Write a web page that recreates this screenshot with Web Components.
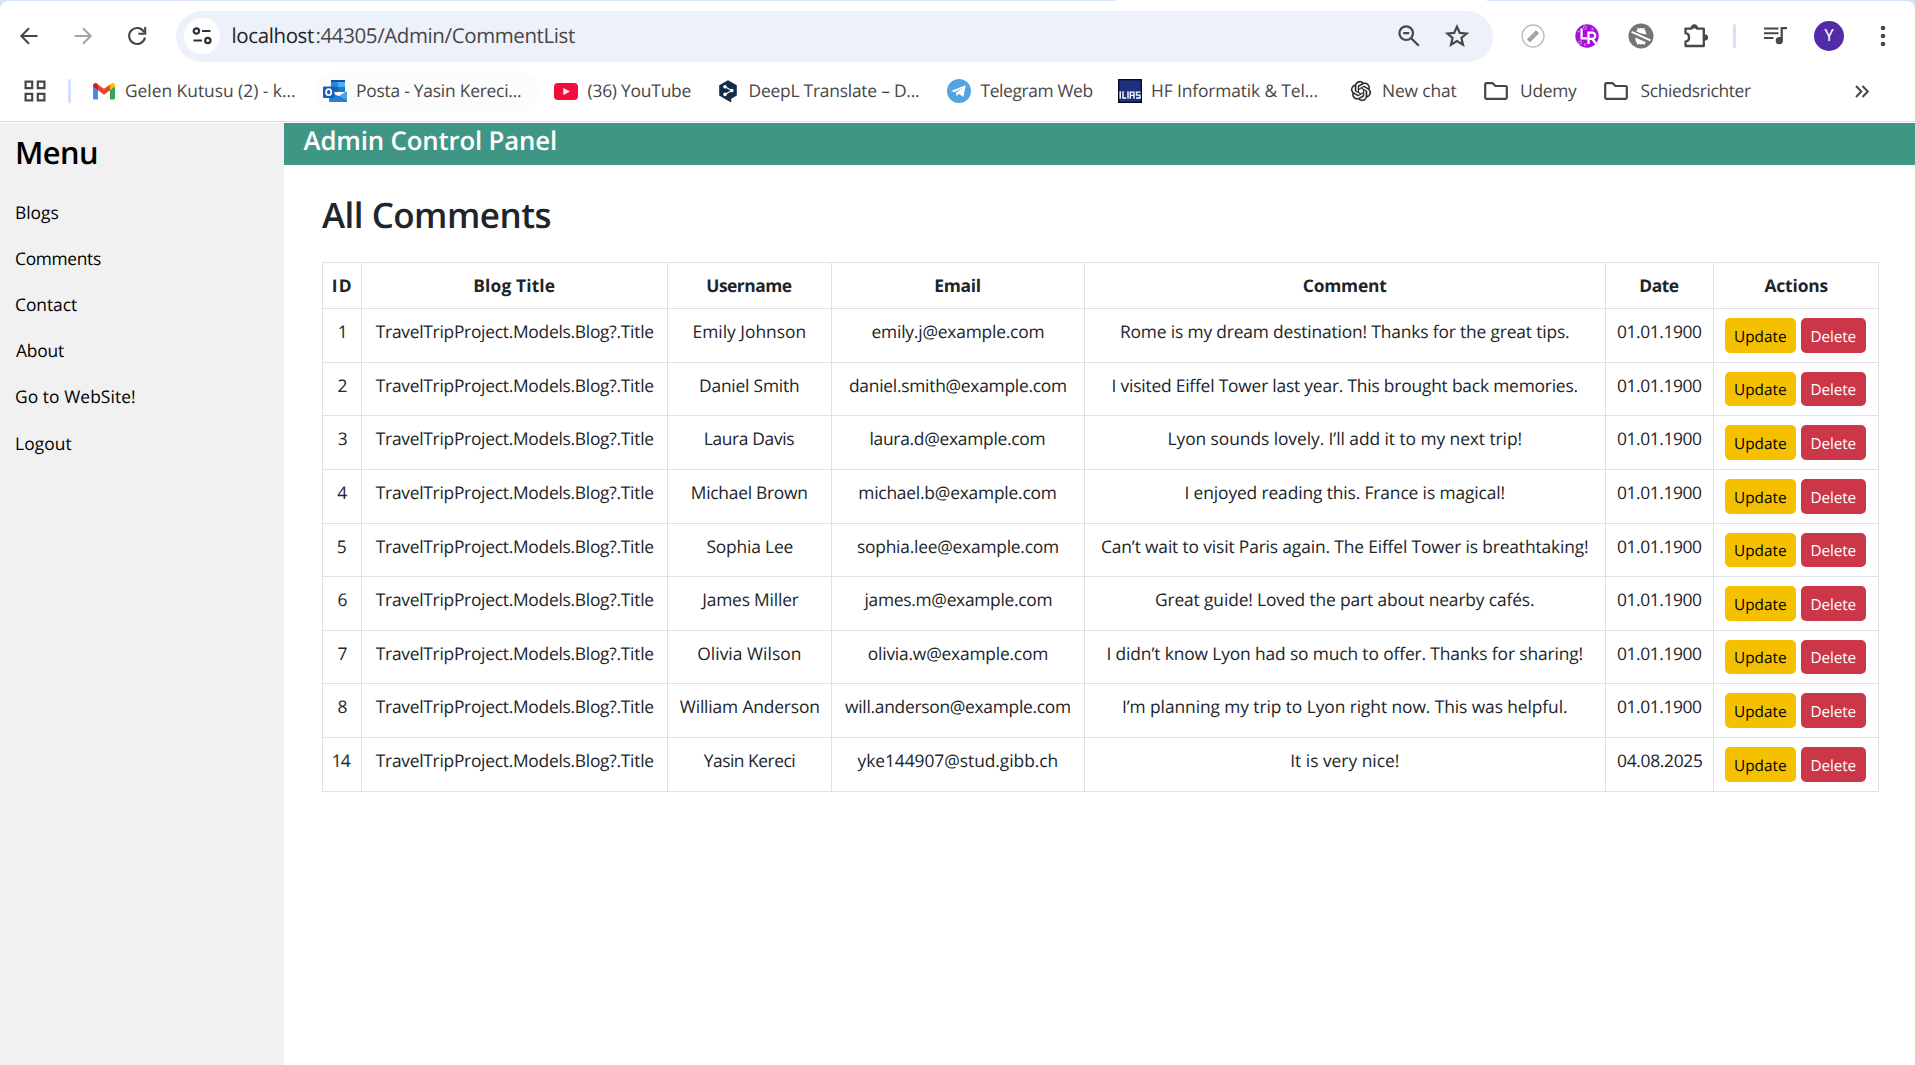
<!DOCTYPE html>
<html lang="en">
<head>
<meta charset="utf-8">
<title>Admin Control Panel</title>
<style>
html,body{margin:0;height:100%;overflow:hidden;background:#fff}
body{font-family:"Open Sans","Noto Sans",sans-serif;color:#212529}
</style>
</head>
<body>
<browser-window></browser-window>
<script>
const ctx = document.createElement('canvas').getContext('2d');

/* A run of text whose drawn width is given in pixels. */
class FitText extends HTMLElement {
  constructor() {
    super();
    this.attachShadow({mode: 'open'}).innerHTML =
      '<style>:host{display:block;flex:none;white-space:nowrap;text-rendering:geometricPrecision;text-align:left}span{display:inline-block}</style><span><slot></slot></span>';
  }
  connectedCallback() {
    const w = parseFloat(this.getAttribute('w'));
    const text = this.textContent;
    const cs = getComputedStyle(this);
    ctx.font = `${cs.fontWeight} ${cs.fontSize} ${cs.fontFamily}`;
    const m = ctx.measureText(text);
    const ink = m.actualBoundingBoxLeft + m.actualBoundingBoxRight;
    const span = this.shadowRoot.querySelector('span');
    if (text.length > 1) span.style.letterSpacing = ((w - ink) / (text.length - 1)).toFixed(4) + 'px';
    span.style.marginLeft = m.actualBoundingBoxLeft.toFixed(2) + 'px';
    this.style.width = w + 'px';
  }
}
customElements.define('fit-text', FitText);

const ICONS = {
back: [18,18,'<path d="M17.5 9H1.5M9 1.2L1.3 9L9 16.8" fill="none" stroke="#474747" stroke-width="2"/>'],
forward: [18,18,'<path d="M.5 9H16.5M9 1.2L16.7 9L9 16.8" fill="none" stroke="#a3a4a6" stroke-width="2"/>'],
reload: [20,20,'<path d="M17.2 6.2A8 8 0 1 0 18 11.5" fill="none" stroke="#474747" stroke-width="2.1"/><path d="M18.2 1V7.8H11.4" fill="none" stroke="#474747" stroke-width="2.1"/>'],
site: [20,18,'<g fill="none" stroke="#303134" stroke-width="2.2"><circle cx="4.4" cy="4" r="2.7"/><path d="M10 4H18.5M1.5 13.5H10"/><circle cx="15.8" cy="13.5" r="2.7"/></g>'],
zoomout: [22,22,'<g fill="none" stroke="#474747" stroke-width="2.2"><circle cx="8.2" cy="8.2" r="6.8"/><path d="M13.2 13.2L20.8 20.8M5.2 8.2H11.2"/></g>'],
star: [24,23,'<path d="M12 2.6L14.8 8.9L21.6 9.5L16.4 14L18 20.7L12 17.1L6 20.7L7.6 14L2.4 9.5L9.2 8.9Z" transform="translate(0 -1)" fill="none" stroke="#474747" stroke-width="2.2"/>'],
ruler: [24,24,'<circle cx="12" cy="12" r="11" fill="#fff" stroke="#bdbdbd" stroke-width="1.4"/><path d="M6 15.2L15 6.2L18 9.2L9 18.2Z" fill="#9c9c9c"/><path d="M9 13l1.6 1.6M11 11l1.6 1.6M13 9l1.6 1.6" stroke="#ddd" stroke-width=".8"/>'],
lr: [24,24,'<circle cx="12" cy="12" r="11.7" fill="#aa0dd8"/><g fill="none" stroke="#dc91ef" stroke-width="1"><circle cx="10" cy="3.5" r="1.6"/><circle cx="17.5" cy="5" r=".8"/><circle cx="5" cy="18.5" r="1.6"/><circle cx="10" cy="20.5" r=".8"/><circle cx="3.5" cy="7.5" r=".6"/></g><path d="M6.6 4.6V14.4H12.4" fill="none" stroke="#fff" stroke-width="2.3"/><path d="M13.5 20V8.7H17.2A3 3 0 0 1 17.2 14.8H14M17 14.8L21 19.6" fill="none" stroke="#fff" stroke-width="2.3"/>'],
nobot: [26,26,'<circle cx="13" cy="13" r="12.5" fill="#757575"/><path d="M8 9.6C8.2 8 8.8 7 9.8 6.2L9 4.6L11 5.4Q13 4.8 15 5.4L17 4.6L16.2 6.2C17.6 7.4 18.3 9 18.4 11.6Z" fill="#fff"/><path d="M7.4 14.4L18 19.2L17 20.2L17 21.8L15 21Q13 21.8 11 21L9 21.8L9 20.2C7.8 18.8 7.3 17 7.4 14.4Z" fill="#fff"/><path d="M2.6 8.4L23.4 17.8" stroke="#757575" stroke-width="4.6"/><path d="M3.6 8.9L22.4 17.3" stroke="#fff" stroke-width="2"/>'],
puzzle: [26,25,'<path d="M2.5 4.6H8.6C8.2 3 9.6 1.8 11.3 1.8S14.4 3 14 4.6H20.8V22H2.5V17.7C4.5 17.5 6 16 6 14.1V12.9C6 10.9 4.5 9.4 2.5 9.2Z" fill="none" stroke="#474747" stroke-width="2.3" stroke-linejoin="round"/><path d="M8.4 4.5V3.2A2.9 2.9 0 0 1 14.2 3.2V4.5ZM21 10.6H22.2A2.9 2.9 0 0 1 22.2 16.4H21Z" fill="#474747"/>'],
music: [24,18,'<path d="M0 1.5H14.5M0 6.3H14.5M0 11H9.5" stroke="#474747" stroke-width="2.1"/><path d="M17.7 14V1.2H23" fill="none" stroke="#474747" stroke-width="2.2"/><circle cx="15.3" cy="13.7" r="3.6" fill="#474747"/>'],
dots: [6,22,'<g fill="#474747"><circle cx="3" cy="3" r="2.3"/><circle cx="3" cy="11" r="2.3"/><circle cx="3" cy="19" r="2.3"/></g>'],
apps: [22,22,'<g fill="none" stroke="#474747" stroke-width="2.2"><path d="M1.6 1.6H8.2V8.2H1.6ZM13.8 1.6H20.4V8.2H13.8ZM1.6 13.8H8.2V20.4H1.6ZM13.8 13.8H20.4V20.4H13.8Z"/></g>'],
gmail: [22,17,'<path d="M0 3V15.3Q0 16.6 1.4 16.6H5V6.6Z" fill="#4f85ed"/><path d="M22 3V15.3Q22 16.6 20.6 16.6H17V6.6Z" fill="#34a653"/><path d="M17 1.4V7.2L22 3.6V2.5C22 .3 19.6-.6 18 .6Z" fill="#fbbc04"/><path d="M5 7.2V1.4L11 5.8L17 1.4V7.2L11 11.7Z" fill="#ea4335"/><path d="M0 2.5V3.6L5 7.2V1.4L4 .6C2.4-.6 0 .3 0 2.5Z" fill="#c5221f"/>'],
outlook: [24,22,'<path d="M8 0H22V12H8Z" fill="#2786d6"/><path d="M8 0H22V2H8Z" fill="#1c4fa1"/><path d="M15 2H22V7H15Z" fill="#46b5ee"/><path d="M15 7H22V12H15Z" fill="#1e79cc"/><path d="M8 7H15V12H8Z" fill="#1a5fb4"/><path d="M6 11L15 16.5L24 11V20.8Q24 22 22.8 22H7.2Q6 22 6 20.8Z" fill="#3fa5e8"/><path d="M6 11L24 21.5L22.8 22H7.2Q6 22 6 20.8Z" fill="#2b7fd9"/><path d="M14 15.8L24 21.4" stroke="#1c4fa1" stroke-width=".8"/><rect y="6.5" width="11.5" height="11.5" rx="1" fill="#1460bd"/><ellipse cx="5.7" cy="12.2" rx="2.6" ry="3" fill="none" stroke="#fff" stroke-width="1.7"/>'],
youtube: [24,17,'<rect width="24" height="17" rx="4" fill="#f20d3c"/><path d="M9.4 5L15.8 8.5L9.4 12Z" fill="#fff"/>'],
deepl: [18,23,'<path d="M9 .3L17.8 5.2V15.6L12.2 18.8V22.6L8.2 20.2L.2 15.6V5.2Z" fill="#142c46"/><path d="M6 6.8L12.6 10.6L6 14.4" stroke="#fff" stroke-width="1.2" fill="none"/><g fill="#fff"><circle cx="6" cy="6.8" r="1.8"/><circle cx="12.8" cy="10.6" r="1.8"/><circle cx="6" cy="14.4" r="1.8"/></g>'],
telegram: [24,24,'<circle cx="12" cy="12" r="12" fill="#56a4df"/><path d="M4 12L18.7 6.2L16.4 18L11.9 14.8L9.5 17.3L9.2 13.7L15.8 8.4L7.7 13.2Z" fill="#fff"/>'],
ilias: [24,24,'<rect width="24" height="24" fill="#030b20"/><rect x="1.3" y="1.3" width="21.4" height="21.4" fill="#1d3180"/><g fill="none" stroke="#fff" stroke-width="1.4"><path d="M2.2 12.3V19.7M5 12.3V19H8.2M10 12.3V19.7M12.3 19.7V13.1H16V19.7M12.3 16.4H16M22.5 13.1H18.5V16.1H22V19H18"/></g>'],
openai: [24,24,'<path fill="#202123" stroke="#202123" stroke-width=".3" d="M22.28 9.82a5.98 5.98 0 0 0-.52-4.91 6.05 6.05 0 0 0-6.51-2.9A6.07 6.07 0 0 0 4.98 4.18a5.98 5.98 0 0 0-4 2.9 6.05 6.05 0 0 0 .74 7.1 5.98 5.98 0 0 0 .51 4.91 6.05 6.05 0 0 0 6.52 2.9A5.98 5.98 0 0 0 13.26 24a6.06 6.06 0 0 0 5.77-4.21 5.99 5.99 0 0 0 4-2.9 6.06 6.06 0 0 0-.75-7.07zM13.26 22.43a4.48 4.48 0 0 1-2.88-1.04l.14-.08 4.78-2.76a.8.8 0 0 0 .39-.68v-6.74l2.02 1.17a.07.07 0 0 1 .04.05v5.58a4.5 4.5 0 0 1-4.49 4.5zM3.6 18.3a4.47 4.47 0 0 1-.53-3.01l.14.08 4.78 2.76a.77.77 0 0 0 .78 0l5.84-3.37v2.33a.08.08 0 0 1-.03.06L9.74 19.95a4.5 4.5 0 0 1-6.14-1.65zM2.34 7.9a4.49 4.49 0 0 1 2.37-1.98V11.6a.77.77 0 0 0 .39.68l5.81 3.35-2.02 1.17a.08.08 0 0 1-.07 0l-4.83-2.79A4.5 4.5 0 0 1 2.34 7.87zm16.6 3.86-5.83-3.39 2.01-1.16a.08.08 0 0 1 .07 0l4.83 2.79a4.49 4.49 0 0 1-.68 8.1v-5.68a.79.79 0 0 0-.4-.66zm2.01-3.02-.14-.09-4.77-2.78a.78.78 0 0 0-.79 0L9.41 9.23V6.9a.07.07 0 0 1 .03-.06l4.83-2.79a4.5 4.5 0 0 1 6.68 4.66zM8.31 12.86l-2.02-1.16a.08.08 0 0 1-.04-.06V6.07a4.5 4.5 0 0 1 7.38-3.45l-.14.08-4.78 2.76a.8.8 0 0 0-.4.68zm1.1-2.37L12 9l2.61 1.5v3l-2.6 1.5-2.61-1.5z"/>',20,20],
folder: [24,18,'<path d="M1.2 15.6V2.4Q1.2 1.2 2.4 1.2H8.6L11.5 4H21.6Q22.8 4 22.8 5.2V15.6Q22.8 16.8 21.6 16.8H2.4Q1.2 16.8 1.2 15.6Z" fill="none" stroke="#474747" stroke-width="2.2"/>'],
more: [14,13,'<path d="M1 1L6.3 6.5L1 12M7.5 1L12.8 6.5L7.5 12" fill="none" stroke="#474747" stroke-width="2"/>']
};

class UiIcon extends HTMLElement {
  constructor() { super(); this.attachShadow({mode: 'open'}); }
  connectedCallback() {
    const [vw, vh, body, w = vw, h = vh] = ICONS[this.getAttribute('name')];
    this.shadowRoot.innerHTML = `<style>:host{display:block;flex:none;width:${w}px;height:${h}px}svg{display:block;overflow:visible}</style><svg width="${w}" height="${h}" viewBox="0 0 ${vw} ${vh}">${body}</svg>`;
  }
}
customElements.define('ui-icon', UiIcon);

class NavToolbar extends HTMLElement {
  constructor() { super(); this.attachShadow({mode: 'open'}); }
  connectedCallback() {
    this.shadowRoot.innerHTML = `<style>
:host{display:block;flex:none;height:70px;background:#fff;color:#474747}
.tabs{height:9px;display:flex;background:#d6e2fb}
.edge{flex:1;display:flex;background:#fff;border-top:1px solid #d6e2fb;box-sizing:border-box;border-radius:10px 10px 0 0}
.gap{width:372px;height:1px;background:#fff;margin:-1px 0 0 1115px}
.row{display:flex;align-items:center;height:54px;padding-left:20px}
.omni{display:flex;align-items:center;box-sizing:border-box;width:1317px;height:51px;margin-left:29px;padding-left:8px;border-radius:26px;background:#edf1fa}
.site{width:36px;height:36px;border-radius:50%;background:#fff;display:flex;align-items:center;justify-content:center}
.url{display:flex;margin-left:12.5px;font-size:20.5px;line-height:30px}
.host{color:#1f1f1f}
.sep{width:3px;height:24px;border-radius:2px;background:#d3e0fb}
.avatar{width:30px;height:30px;border-radius:50%;background:#532aa8;color:#fff;display:flex;align-items:center;justify-content:center;font:16px/30px Roboto,sans-serif}
</style>
<div class="tabs"><div class="edge"><div class="gap"></div></div></div>
<div class="row">
<ui-icon name="back"></ui-icon><ui-icon name="forward" style="margin-left:36px"></ui-icon><ui-icon name="reload" style="margin-left:35px"></ui-icon>
<div class="omni"><div class="site"><ui-icon name="site"></ui-icon></div>
<div class="url"><fit-text class="host" w="81.5">localhost</fit-text><fit-text w="258.5" style="margin-left:2.5px">:44305/Admin/CommentList</fit-text></div>
<ui-icon name="zoomout" style="margin-left:823px"></ui-icon><ui-icon name="star" style="margin-left:25px"></ui-icon></div>
<ui-icon name="ruler" style="margin-left:27.5px"></ui-icon>
<ui-icon name="lr" style="margin-left:30px"></ui-icon>
<ui-icon name="nobot" style="margin-left:29px"></ui-icon>
<ui-icon name="puzzle" style="margin-left:29.5px"></ui-icon>
<div class="sep" style="margin-left:24px"></div>
<ui-icon name="music" style="margin-left:28px"></ui-icon>
<div class="avatar" style="margin-left:26px">Y</div>
<ui-icon name="dots" style="margin-left:36px"></ui-icon>
</div>`;
  }
}
customElements.define('nav-toolbar', NavToolbar);

/* icon, gap before, gap after the icon, label, label width */
const BOOKMARKS = [
['gmail',22,11,'Gelen Kutusu (2) - k...',169],
['outlook',20,10,'Posta - Yasin Kereci...',164],
['youtube',15.5,9.5,'(36) YouTube',103],
['deepl',28.5,12.5,'DeepL Translate – D...',169.5],
['telegram',28,9.5,'Telegram Web',112],
['ilias',25.5,10,'HF Informatik & Tel...',165.5],
['openai',33.5,12,'New chat',73.5],
['folder',27.5,13,'Udemy',56],
['folder',27,12.5,'Schiedsrichter',110.5]];

class BookmarkBar extends HTMLElement {
  constructor() { super(); this.attachShadow({mode: 'open'}); }
  connectedCallback() {
    this.shadowRoot.innerHTML = `<style>
:host{display:flex;flex:none;box-sizing:border-box;height:52px;padding:0 0 9px 24px;align-items:center;border-bottom:1px solid #dadce0;color:#474747;font-size:17.4px;line-height:26px}
.sep{width:3px;height:24px;border-radius:2px;background:#d3e0fb;margin-left:22px}
.item{display:flex;align-items:center;flex:none}
.item.hover{background:#fcfcfc;border-radius:21px;height:41px;padding:0 17.5px 0 8px}
</style>
<ui-icon name="apps"></ui-icon><div class="sep"></div>` +
    BOOKMARKS.map(([icon, before, gap, label, w]) =>
      `<div class="item${icon === 'outlook' ? ' hover' : ''}" style="margin-left:${before}px"><ui-icon name="${icon}"></ui-icon><fit-text w="${w}" style="margin-left:${gap}px">${label.replace('&', '&amp;')}</fit-text></div>`
    ).join('') + '<ui-icon name="more" style="margin-left:103.5px"></ui-icon>';
  }
}
customElements.define('bookmark-bar', BookmarkBar);

class SideMenu extends HTMLElement {
  constructor() { super(); this.attachShadow({mode: 'open'}); }
  connectedCallback() {
    const items = [['Blogs',42.5],['Comments',85],['Contact',61],['About',48],['Go to WebSite!',119],['Logout',55.5]];
    this.shadowRoot.innerHTML = `<style>
:host{display:block;flex:none;box-sizing:border-box;width:284px;padding-left:16px;background:#f1f1f1;color:#000}
h2{margin:0;height:67px;padding:9px 0 0 1px;box-sizing:border-box;font-size:30.8px;line-height:42px;font-weight:600}
a{display:block;font-size:17.4px;line-height:46px;height:46px}
a:last-of-type{padding-top:1px}
</style><h2><fit-text w="80">Menu</fit-text></h2>` + items.map(([t, w]) => `<a><fit-text w="${w}">${t}</fit-text></a>`).join('');
  }
}
customElements.define('side-menu', SideMenu);

class ActionButton extends HTMLElement {
  constructor() {
    super();
    this.attachShadow({mode: 'open'}).innerHTML = `<style>
:host{display:flex;justify-content:center;flex:none;box-sizing:border-box;width:65px;height:35px;border-radius:5px;background:#cb3749;color:#fff;font-size:15.3px;line-height:38px}
:host([kind=update]){width:71px;background:#f4c000;color:#000}
:host([short]){height:34px;line-height:36px}
</style><slot></slot>`;
  }
}
customElements.define('action-button', ActionButton);

const COLS = '39px 306px 164px 253px 521px 108px 165px';

class CommentRow extends HTMLElement {
  constructor() { super(); this.attachShadow({mode: 'open'}); }
  connectedCallback() {
    const d = this.data;
    const size = d.height === 53 ? ' short' : '';
    this.shadowRoot.innerHTML = `<style>
:host{display:grid;grid-template-columns:${COLS};box-sizing:border-box;height:${d.height}px;border-bottom:1px solid #dee2e6;font-size:17.4px;line-height:24px;font-weight:${d.head ? 700 : 400}}
.cell{display:flex;justify-content:center;padding-top:11px;border-right:1px solid #dee2e6}
.cell:first-of-type{padding-right:.5px}
.cell:nth-of-type(4){padding-right:1px}
.cell.actions{padding:9px 0 0 11px;justify-content:flex-start;gap:5px}
</style>` + d.cells.map(([t, w]) => `<div class="cell"><fit-text w="${w}">${t}</fit-text></div>`).join('') +
    (d.head ? '' : `<div class="cell actions"><action-button kind="update"${size}><fit-text w="51">Update</fit-text></action-button><action-button${size}><fit-text w="44">Delete</fit-text></action-button></div>`);
  }
}
customElements.define('comment-row', CommentRow);

const ROWS = [
['1',6,'Emily Johnson',112,'emily.j@example.com',172,'Rome is my dream destination! Thanks for the great tips.',448,54],
['2',8.5,'Daniel Smith',99,'daniel.smith@example.com',217,'I visited Eiffel Tower last year. This brought back memories.',465,53],
['3',8,'Laura Davis',89.5,'laura.d@example.com',174,'Lyon sounds lovely. I’ll add it to my next trip!',353,54],
['4',9,'Michael Brown',115.5,'michael.b@example.com',196.5,'I enjoyed reading this. France is magical!',319,54],
['5',8,'Sophia Lee',86,'sophia.lee@example.com',201,'Can’t wait to visit Paris again. The Eiffel Tower is breathtaking!',486,53],
['6',8.5,'James Miller',98.5,'james.m@example.com',188,'Great guide! Loved the part about nearby cafés.',378,54],
['7',8.5,'Olivia Wilson',102.5,'olivia.w@example.com',179.5,'I didn’t know Lyon had so much to offer. Thanks for sharing!',475,53],
['8',8.5,'William Anderson',139.5,'will.anderson@example.com',225,'I’m planning my trip to Lyon right now. This was helpful.',444,54],
['14',18,'Yasin Kereci',91.5,'yke144907@stud.gibb.ch',200,'It is very nice!',107.5,54]];

class CommentTable extends HTMLElement {
  constructor() { super(); this.attachShadow({mode: 'open'}); }
  connectedCallback() {
    this.shadowRoot.innerHTML = '<style>:host{display:block;width:1556px;border:1px solid #dee2e6;border-width:1px 0 0 1px}</style>';
    const add = data => {
      const row = document.createElement('comment-row');
      row.data = data;
      this.shadowRoot.append(row);
    };
    add({head: true, height: 46, cells: [['ID',18],['Blog Title',80.5],['Username',84.5],['Email',44.5],['Comment',82.5],['Date',38.5],['Actions',63]]});
    for (const [id, iw, user, uw, mail, mw, text, tw, height] of ROWS)
      add({height, cells: [[id,iw],['TravelTripProject.Models.Blog?.Title',277.5],[user,uw],[mail,mw],[text,tw],[id === '14' ? '04.08.2025' : '01.01.1900',85]]});
  }
}
customElements.define('comment-table', CommentTable);

class AdminPage extends HTMLElement {
  constructor() { super(); this.attachShadow({mode: 'open'}); }
  connectedCallback() {
    this.shadowRoot.innerHTML = `<style>
:host{display:flex;flex:1;padding-top:1px;background:#fff}
main{flex:1}
header{height:42px;background:#409685;color:#fff;font-size:25.8px;line-height:34px;font-weight:600;padding-left:19.5px}
section{padding:0 0 0 38px}
h1{margin:0;height:97px;padding-top:27px;box-sizing:border-box;font-size:35px;line-height:48px;font-weight:600}
</style>
<side-menu></side-menu>
<main><header><fit-text w="252.5">Admin Control Panel</fit-text></header>
<section><h1><fit-text w="228.5">All Comments</fit-text></h1><comment-table></comment-table></section></main>`;
  }
}
customElements.define('admin-page', AdminPage);

class BrowserWindow extends HTMLElement {
  constructor() { super(); this.attachShadow({mode: 'open'}); }
  connectedCallback() {
    this.shadowRoot.innerHTML = '<style>:host{display:flex;flex-direction:column;width:1915px;height:1065px;overflow:hidden}</style><nav-toolbar></nav-toolbar><bookmark-bar></bookmark-bar><admin-page></admin-page>';
  }
}
customElements.define('browser-window', BrowserWindow);
</script>
</body>
</html>
